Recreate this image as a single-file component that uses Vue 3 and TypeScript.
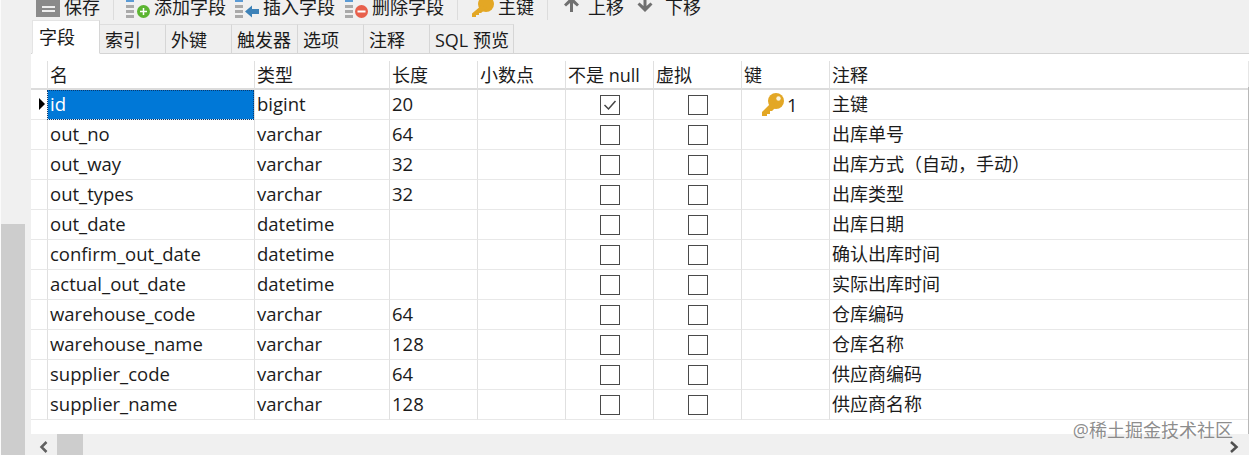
<script setup lang="ts">
interface Field {
  name: string
  type: string
  len: string
  comment: string
  notNull?: boolean
  key?: string
}

const tabs: string[] = ['字段', '索引', '外键', '触发器', '选项', '注释', 'SQL 预览']
const heads: string[] = ['名', '类型', '长度', '小数点', '不是 null', '虚拟', '键', '注释']

const fields: Field[] = [
  { name: 'id', type: 'bigint', len: '20', comment: '主键', notNull: true, key: '1' },
  { name: 'out_no', type: 'varchar', len: '64', comment: '出库单号' },
  { name: 'out_way', type: 'varchar', len: '32', comment: '出库方式（自动，手动）' },
  { name: 'out_types', type: 'varchar', len: '32', comment: '出库类型' },
  { name: 'out_date', type: 'datetime', len: '', comment: '出库日期' },
  { name: 'confirm_out_date', type: 'datetime', len: '', comment: '确认出库时间' },
  { name: 'actual_out_date', type: 'datetime', len: '', comment: '实际出库时间' },
  { name: 'warehouse_code', type: 'varchar', len: '64', comment: '仓库编码' },
  { name: 'warehouse_name', type: 'varchar', len: '128', comment: '仓库名称' },
  { name: 'supplier_code', type: 'varchar', len: '64', comment: '供应商编码' },
  { name: 'supplier_name', type: 'varchar', len: '128', comment: '供应商名称' },
]
</script>

<template>
  <div class="app">
    <div class="toolbar">
      <div class="tool first">
        <svg class="ic save" width="24" height="24" viewBox="0 0 24 24">
          <rect x="0" y="0" width="24" height="24" fill="#8a8a8a" />
          <rect x="6" y="13" width="13" height="2" fill="#eee" />
          <rect x="6" y="17" width="13" height="2" fill="#eee" />
        </svg>
        <span>保存</span>
      </div>
      <i class="sep sep1"></i>
      <div class="tool add">
        <svg class="ic" width="26" height="24" viewBox="0 0 26 24">
          <rect x="1" y="0" width="8" height="2" fill="#5b9bd5" />
          <rect x="1" y="5" width="8" height="3" fill="#a9a9a9" />
          <rect x="1" y="10" width="8" height="3" fill="#a9a9a9" />
          <rect x="1" y="15" width="8" height="3" fill="#a9a9a9" />
          <circle cx="18.500" cy="11.500" r="6.500" fill="#5cb531" />
          <path d="M15 11.500h7M18.500 8v7" stroke="#fff" stroke-width="1.500" />
        </svg>
        <span>添加字段</span>
      </div>
      <div class="tool ins">
        <svg class="ic" width="26" height="24" viewBox="0 0 26 24">
          <rect x="1" y="0" width="8" height="2" fill="#5b9bd5" />
          <rect x="1" y="5" width="8" height="3" fill="#a9a9a9" />
          <rect x="1" y="10" width="8" height="3" fill="#a9a9a9" />
          <rect x="1" y="15" width="8" height="3" fill="#a9a9a9" />
          <path d="M11 11.500l7-6v3.500h7v5h-7v3.500z" fill="#3d82b8" />
        </svg>
        <span>插入字段</span>
      </div>
      <div class="tool del">
        <svg class="ic" width="25" height="24" viewBox="0 0 25 24">
          <rect x="1" y="0" width="8" height="2" fill="#5b9bd5" />
          <rect x="1" y="5" width="8" height="3" fill="#a9a9a9" />
          <rect x="1" y="10" width="8" height="3" fill="#a9a9a9" />
          <rect x="1" y="15" width="8" height="3" fill="#a9a9a9" />
          <circle cx="17.500" cy="11.500" r="6.500" fill="#e8604c" />
          <rect x="13.500" y="10.500" width="8" height="2" fill="#fff" />
        </svg>
        <span>删除字段</span>
      </div>
      <i class="sep sep2"></i>
      <div class="tool pk">
        <svg class="ic" width="22" height="24" viewBox="0 0 22 24">
          <circle cx="14" cy="8" r="8" fill="#e3a725" />
          <path d="M10 9L0 17.500V21H4V19H7V17H9L15 12z" fill="#e3a725" />
        </svg>
        <span>主键</span>
      </div>
      <i class="sep sep3"></i>
      <div class="tool up">
        <svg class="ic" width="17" height="20" viewBox="0 0 17 20">
          <path d="M8.500 0L16 7.500 14 9.500 10 6V15H7V6L3 9.500 1 7.500z" fill="#707070" />
        </svg>
        <span>上移</span>
      </div>
      <div class="tool down">
        <svg class="ic" width="16" height="20" viewBox="0 0 16 20">
          <path d="M8 15L0.500 7.500 2.500 5.500 6.500 9V0H9.500V9L13.500 5.500 15.500 7.500z" fill="#707070" />
        </svg>
        <span>下移</span>
      </div>
    </div>

    <div class="body">
      <div class="vscroll">
        <div class="vrail"><div class="vthumb"></div></div>
      </div>
      <div class="main">
        <div class="tabs">
          <div v-for="(t, i) in tabs" :key="t" class="tab" :class="{ active: i === 0, last: i === tabs.length - 1 }">{{ t }}</div>
        </div>
        <div class="table">
          <div class="grid">
            <div class="gutter head"></div>
            <div v-for="h in heads" :key="h" class="cell head">{{ h }}</div>
            <template v-for="(f, r) in fields" :key="f.name">
              <div class="gutter">
                <span v-if="r === 0" class="marker"></span>
              </div>
              <div class="cell latin" :class="{ selected: r === 0 }"><span>{{ f.name }}</span></div>
              <div class="cell latin">{{ f.type }}</div>
              <div class="cell latin">{{ f.len }}</div>
              <div class="cell"></div>
              <div class="cell center">
                <span class="check">
                  <svg v-if="f.notNull" width="18" height="18" viewBox="0 0 18 18">
                    <path d="M3.500 9l4 4 7-8" fill="none" stroke="#444" stroke-width="1.500" />
                  </svg>
                </span>
              </div>
              <div class="cell center"><span class="check"></span></div>
              <div class="cell keycell latin">
                <template v-if="f.key">
                  <svg width="22" height="24" viewBox="0 0 22 24">
                    <circle cx="14" cy="8" r="8" fill="#e3a725" />
                    <path d="M10 9L0 19V23H5V21H8V18H10L15 13z" fill="#e3a725" />
                    <circle cx="16.500" cy="5.500" r="2.200" fill="#fbf3dc" />
                  </svg>
                  <span class="keynum">{{ f.key }}</span>
                </template>
              </div>
              <div class="cell">{{ f.comment }}</div>
            </template>
          </div>
          <div class="edge"></div>
        </div>
        <div class="hscroll">
          <svg class="arrow" width="9" height="12" viewBox="0 0 9 12">
            <path d="M7.500 1L2.500 6 7.500 11" fill="none" stroke="#606060" stroke-width="2.500" />
          </svg>
          <div class="hthumb"></div>
          <svg class="arrow right" width="10" height="12" viewBox="0 0 10 12">
            <path d="M2 1L7.500 6 2 11" fill="none" stroke="#505050" stroke-width="2.500" />
          </svg>
        </div>
      </div>
    </div>
    <div class="watermark">@稀土掘金技术社区</div>
  </div>
</template>

<style>
html, body {
  margin: 0;
  background: #f0f0f0;
}
</style>

<style scoped>
.app {
  position: relative;
  width: 1249px;
  height: 455px;
  overflow: hidden;
  background: #f0f0f0;
  font-family: "Open Sans", "Noto Sans CJK SC", sans-serif;
  font-size: 18px;
  color: #1b1b1b;
}
.app::before {
  content: "";
  position: absolute;
  left: 0;
  top: 0;
  bottom: 0;
  width: 1px;
  background: #fbfbfb;
}
.toolbar {
  height: 22px;
  display: flex;
  align-items: flex-start;
  overflow: hidden;
  padding-left: 36px;
  box-sizing: border-box;
}
.tool {
  display: flex;
  align-items: flex-start;
  height: 22px;
  line-height: 24px;
  white-space: nowrap;
}
.tool span {
  margin-top: -5px;
  flex: none;
}
.ic {
  flex: none;
}
.save {
  margin-top: -7px;
  margin-right: 4px;
}
.sep {
  flex: none;
  width: 1px;
  height: 20px;
  background: #dcdcdc;
}
.sep1 { margin: 0 11px 0 13px; }
.add .ic, .ins .ic { margin-right: 3px; }
.del .ic { margin-right: 3px; }
.add { margin-right: 8px; }
.ins { margin-right: 9px; }
.sep2 { margin: 0 14px 0 13px; }
.pk .ic { margin-top: -4px; margin-right: 4px; }
.sep3 { margin: 0 15px 0 13px; }
.up .ic { margin-top: -3px; margin-right: 8px; }
.down .ic { margin-top: -3px; margin-right: 12px; }
.up { margin-right: 13px; }

.body {
  display: flex;
  height: 433px;
}
.vscroll {
  flex: none;
  width: 31px;
  display: flex;
}
.vrail {
  width: 24px;
  margin-left: 1px;
  display: flex;
  flex-direction: column;
  justify-content: flex-end;
}
.vthumb {
  height: 231px;
  background: #cdcdcd;
}
.main {
  flex: 1;
  min-width: 0;
  display: flex;
  flex-direction: column;
}
.tabs {
  height: 32px;
  box-sizing: border-box;
  display: flex;
  align-items: flex-end;
  padding-left: 1px;
  border-bottom: 1px solid #d4d4d4;
  flex: none;
}
.tab {
  box-sizing: content-box;
  width: 60px;
  height: 28px;
  line-height: 31px;
  padding: 0 0 0 5px;
  border-top: 1px solid #dedede;
  border-right: 1px solid #d6d6d6;
  background: #efefef;
  white-space: nowrap;
  margin-bottom: -1px;
  border-bottom: 1px solid #d4d4d4;
}
.tab.active {
  width: 60px;
  height: 32px;
  line-height: 32px;
  padding-left: 6px;
  background: #fff;
  border-left: 1px solid #e4e4e4;
  border-bottom: 1px solid #fff;
  border-top: 1px solid #e4e4e4;
}
.tab.last {
  width: 78px;
}
.table {
  flex: 1;
  min-height: 0;
  background: #fff;
  display: flex;
  padding-top: 7px;
  box-sizing: border-box;
}
.grid {
  flex: 1;
  display: grid;
  grid-template-columns: 16px 207px 135px 88px 88px 88px 88px 88px 1fr;
  grid-template-rows: 29px repeat(11, 30px);
  align-content: start;
}
.edge {
  flex: none;
  width: 1px;
  background: linear-gradient(#e6e6e6 0 26px, #b8b8b8 26px);
}
.gutter {
  border-bottom: 1px solid #e8e8e8;
  position: relative;
}
.gutter.head,
.cell.head {
  border-bottom: 2px solid #dcdcdc;
}
.cell {
  box-sizing: border-box;
  border-left: 1px solid #e0e0e0;
  border-bottom: 1px solid #e8e8e8;
  padding-left: 2px;
  line-height: 29px;
  white-space: nowrap;
  overflow: hidden;
}
.latin {
  font-size: 18.500px;
  line-height: 27px;
}
.cell.head {
  line-height: 28px;
}
.cell.selected {
  background: #0078d7;
  color: #fff;
  outline: 1px dotted #0a3a70;
  outline-offset: -1px;
}
.marker {
  position: absolute;
  left: 8px;
  top: 8px;
  width: 0;
  height: 0;
  border-left: 6px solid #000;
  border-top: 6px solid transparent;
  border-bottom: 6px solid transparent;
}
.center {
  display: flex;
  align-items: center;
  justify-content: center;
  padding-left: 0;
}
.check {
  box-sizing: border-box;
  display: flex;
  align-items: center;
  justify-content: center;
  width: 20px;
  height: 20px;
  border: 1px solid #4a4a4a;
  background: #fff;
}
.keycell {
  display: flex;
  align-items: center;
  padding-left: 20px;
}
.keynum {
  margin-left: 3px;
}
.hscroll {
  flex: none;
  height: 21px;
  display: flex;
  align-items: center;
  position: relative;
  background: #f0f0f0;
  padding-left: 8px;
}
.arrow {
  margin-top: 5px;
}
.hthumb {
  width: 26px;
  height: 21px;
  background: #cdcdcd;
  margin-left: 9px;
}
.arrow.right {
  margin-left: auto;
  margin-right: 10px;
}
.watermark {
  position: absolute;
  right: 16px;
  top: 418px;
  font-size: 18px;
  line-height: 24px;
  color: rgba(120, 120, 120, 0.85);
  white-space: nowrap;
}
</style>
